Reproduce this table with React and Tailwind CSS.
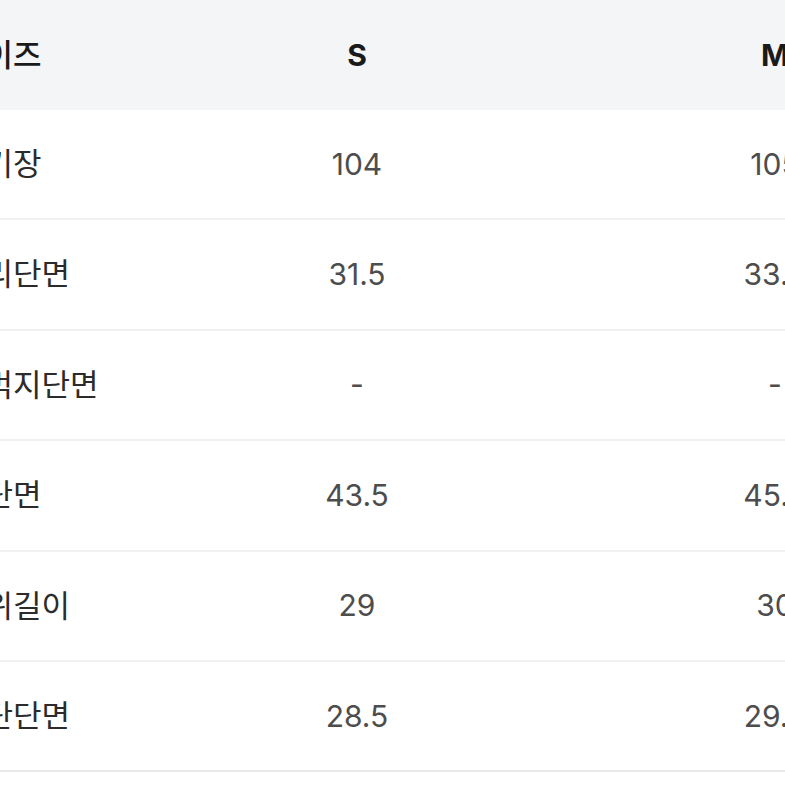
const rows = [
  { label: "총기장", s: "104", m: "105" },
  { label: "허리단면", s: "31.5", m: "33.5" },
  { label: "허벅지단면", s: "-", m: "-" },
  { label: "힙단면", s: "43.5", m: "45.5" },
  { label: "밑위길이", s: "29", m: "30" },
  { label: "밑단단면", s: "28.5", m: "29.5" },
];

export default function App() {
  return (
    <div className="w-[785px] h-[785px] overflow-hidden bg-white font-['Inter','Noto_Sans_CJK_KR',sans-serif] text-[30px]">
      <div className="ml-[-47px] w-[1031px]">
        {/* header */}
        <div className="grid grid-cols-[195px_418px_418px] h-[110px] items-center bg-[#f4f5f7] font-bold text-[#1a1a1a]">
          <div className="ml-[3px] text-[31px] font-medium">사이즈</div>
          <div className="text-center">S</div>
          <div className="text-center">M</div>
        </div>

        {rows.map((r, i) => (
          <div
            key={i}
            className={`grid grid-cols-[195px_418px_418px] h-[110.4px] items-center border-b-2 ${
              i === rows.length - 1 ? "border-[#e9e9eb]" : "border-[#f1f1f3]"
            }`}
          >
            <div className="ml-[3px] text-[31px] text-[#2b2b2b] whitespace-nowrap">{r.label}</div>
            <div className="text-center text-[#4d4d4d]">{r.s}</div>
            <div className="text-center text-[#4d4d4d]">{r.m}</div>
          </div>
        ))}
      </div>
    </div>
  );
}
